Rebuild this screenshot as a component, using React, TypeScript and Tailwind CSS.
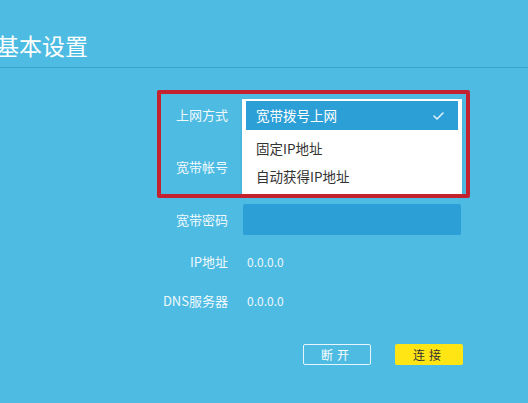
import { useState } from "react";

const options = ["宽带拨号上网", "固定IP地址", "自动获得IP地址"];

function Label(props: { children: React.ReactNode; className?: string }) {
  return (
    <div
      className={`flex items-center justify-end text-[13px] text-[#f0f9fd] ${props.className ?? ""}`}
    >
      {props.children}
    </div>
  );
}

export default function App() {
  const [selected] = useState(0);

  return (
    <div
      className="relative h-[403px] w-[528px] overflow-hidden bg-[#4dbbe2]"
      style={{ fontFamily: '"Noto Sans CJK SC", "Noto Sans", sans-serif' }}
    >
      <header className="h-[68px] border-b border-[#3aa4ce] pt-[33px]">
        <h1 className="-ml-[4px] text-[23px] leading-[24px] text-white">基本设置</h1>
      </header>

      <main className="relative pt-[31px]">
        <div className="grid grid-cols-[228px_218px] gap-x-[15px]">
          <Label>上网方式</Label>
          <div className="relative h-[32px]">
            {/* open select menu */}
            <div className="absolute -left-[1px] top-0 z-10 w-[220px] bg-white px-[4px] pb-[4px] pt-[2px] shadow-sm">
              {options.map((o, i) =>
                i === selected ? (
                  <div
                    key={o}
                    className="flex h-[29px] items-center justify-between bg-[#2c9fd7] pl-[10px] pr-[14px] text-[13.5px] text-white"
                  >
                    <span>{o}</span>
                    <svg width="11" height="8" viewBox="0 0 11 8" fill="none">
                      <polyline
                        points="1,4 4,7 10,1"
                        stroke="#dff2fb"
                        strokeWidth="1.6"
                        strokeLinecap="round"
                        strokeLinejoin="round"
                      />
                    </svg>
                  </div>
                ) : (
                  <div
                    key={o}
                    className={`flex h-[28px] items-center pl-[10px] text-[13.5px] text-[#333] ${i === 1 ? "mt-[4px]" : ""}`}
                  >
                    {o}
                  </div>
                )
              )}
            </div>
          </div>

          <Label className="mt-[20px]">宽带帐号</Label>
          <div className="mt-[20px] h-[32px] bg-[#2c9fd7]" />

          <Label className="mt-[21px]">宽带密码</Label>
          <div className="mt-[21px] h-[31px] rounded-[2px] bg-[#2c9fd7]" />

          <Label className="mt-[17px] h-[20px]">IP地址</Label>
          <div className="mt-[17px] flex h-[20px] items-center pl-[4px] text-[12px] text-[#eef8fc]">0.0.0.0</div>

          <Label className="mt-[19px] h-[20px]">DNS服务器</Label>
          <div className="mt-[19px] flex h-[20px] items-center pl-[4px] text-[12px] text-[#eef8fc]">0.0.0.0</div>
        </div>

        <div className="mt-[33px] flex gap-[24px] pl-[303px]">
          <button className="flex h-[21px] w-[68px] items-center justify-center rounded-[2px] border border-[#e6f5fb] text-[12px] tracking-[4px] text-white">
            断开
          </button>
          <button className="flex h-[21px] w-[68px] items-center justify-center rounded-[2px] bg-[#ffe514] text-[12px] tracking-[4px] text-[#333]">
            连接
          </button>
        </div>

        {/* red annotation frame */}
        <div className="pointer-events-none absolute left-[157px] top-[22px] z-20 h-[108px] w-[313px] rounded-[2px] border-[4px] border-[#c4222e]" />
      </main>
    </div>
  );
}
